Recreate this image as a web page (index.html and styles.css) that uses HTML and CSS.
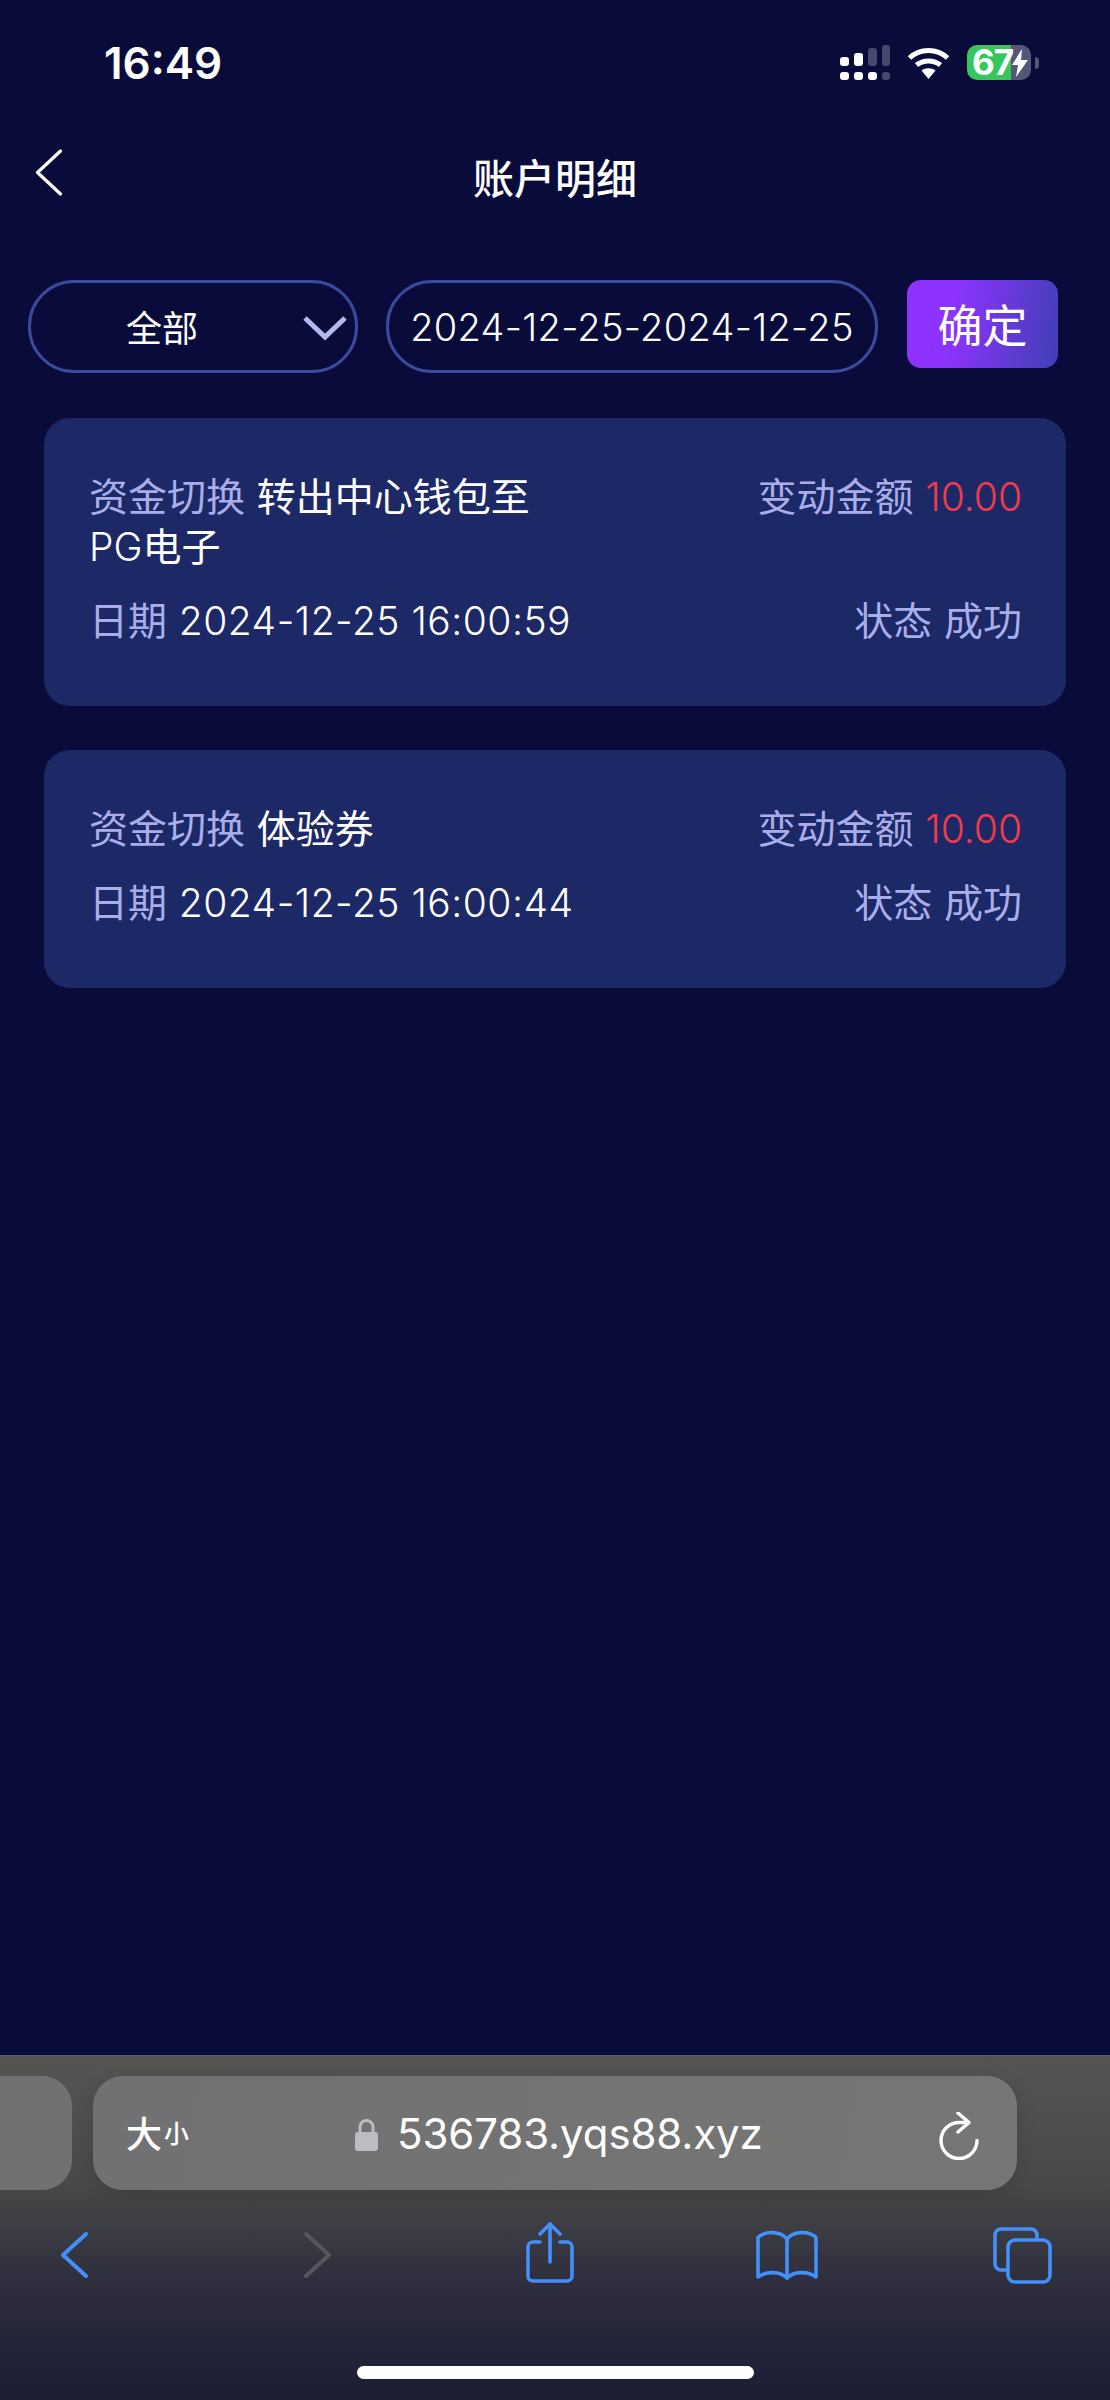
FILE: index.html
```html
<!DOCTYPE html>
<html lang="zh-CN">
<head>
<meta charset="utf-8">
<title>账户明细</title>
<link rel="stylesheet" href="styles.css">
</head>
<body>
<div class="page">
  <header class="status">
    <span class="time">16:49</span>
    <div class="status-icons">
      <svg class="signal" width="50" height="36" viewBox="0 0 50 36" fill="#fff">
        <rect x="0" y="12" width="9" height="9" rx="3"/><rect x="14" y="8" width="9" height="13" rx="3"/>
        <rect x="28" y="3" width="9" height="18" rx="3" opacity=".25"/><rect x="42" y="0" width="8" height="21" rx="3" opacity=".25"/>
        <rect x="0" y="27" width="9" height="8" rx="3"/><rect x="14" y="27" width="9" height="8" rx="3"/>
        <rect x="28" y="27" width="9" height="8" rx="3"/><rect x="42" y="27" width="8" height="8" rx="3" opacity=".25"/>
      </svg>
      <svg class="wifi" width="43" height="32" viewBox="0 0 43 32" fill="none" stroke="#fff" stroke-width="5">
        <path d="M2.5 11C13 1 30 1 40.5 11"/><path d="M9.5 18C16 12.5 27 12.5 33.5 18"/>
        <path d="M14.5 23.5 21.5 32 28.5 23.5C25 20.5 18 20.5 14.5 23.5Z" fill="#fff" stroke="none"/>
      </svg>
      <div class="battery"><span class="batt-level">67</span>
        <svg class="bolt" width="18" height="28" viewBox="0 0 18 28" fill="#fff"><path d="M11 0 1 16h6L5 28 17 11h-7z"/></svg>
      </div>
      <span class="batt-tip"></span>
    </div>
  </header>

  <nav class="navbar">
    <svg class="nav-back" width="28" height="47" viewBox="0 0 28 47" fill="none" stroke="#fff" stroke-width="3.2" stroke-linecap="round" stroke-linejoin="round">
      <path d="M25.500 2 2.500 23.500 25.500 45"/>
    </svg>
    <h1 class="title">账户明细</h1>
  </nav>

  <section class="filters">
    <div class="pill pill-select">
      <span class="select-text">全部</span>
      <svg class="caret" width="44" height="26" viewBox="0 0 44 26" fill="none" stroke="#b3b8ee" stroke-width="5">
        <path d="M2 3 22 22 42 3"/>
      </svg>
    </div>
    <div class="pill pill-date">2024-12-25-2024-12-25</div>
    <button class="confirm">确定</button>
  </section>

  <main class="list">
    <article class="card">
      <div class="row">
        <div class="left narrow"><span class="label">资金切换</span> 转出中心钱包至<span class="latin">PG</span>电子</div>
        <div class="right"><span class="label">变动金额</span> <span class="amount">10.00</span></div>
      </div>
      <div class="row">
        <div class="left"><span class="label">日期</span> <span class="num">2024-12-25 16:00:59</span></div>
        <div class="right"><span class="label">状态</span> <span class="label">成功</span></div>
      </div>
    </article>
    <article class="card">
      <div class="row">
        <div class="left narrow"><span class="label">资金切换</span> 体验券</div>
        <div class="right"><span class="label">变动金额</span> <span class="amount">10.00</span></div>
      </div>
      <div class="row">
        <div class="left"><span class="label">日期</span> <span class="num">2024-12-25 16:00:44</span></div>
        <div class="right"><span class="label">状态</span> <span class="label">成功</span></div>
      </div>
    </article>
  </main>

  <footer class="browser">
    <div class="tabs-strip">
      <div class="prev-tab"></div>
      <div class="urlbar">
        <span class="aa"><span class="aa-big">大</span><span class="aa-small">小</span></span>
        <div class="address">
          <svg class="lock" width="23" height="33" viewBox="0 0 23 33">
            <path d="M5 15V9a6.500 6.500 0 0 1 13 0v6" fill="none" stroke="#bcbcc2" stroke-width="3"/>
            <rect x="0" y="14" width="23" height="19" rx="3" fill="#bcbcc2"/>
          </svg>
          <span class="url">536783.yqs88.xyz</span>
        </div>
        <svg class="reload" width="40" height="48" viewBox="0 0 40 48" fill="none" stroke="#fff" stroke-width="3.400" stroke-linecap="round" stroke-linejoin="round">
          <path d="M38 28.500A18 18 0 1 1 20 10.500H29"/><path d="M19 1 30 10.500 19 20"/>
        </svg>
      </div>
    </div>
    <div class="toolbar">
      <svg class="tool t-back" width="27" height="46" viewBox="0 0 27 46" fill="none" stroke="#4390fb" stroke-width="4" stroke-linecap="round" stroke-linejoin="round"><path d="M25 2 2 23 25 44"/></svg>
      <svg class="tool t-forward" width="27" height="46" viewBox="0 0 27 46" fill="none" stroke="#56565e" stroke-width="4" stroke-linecap="round" stroke-linejoin="round"><path d="M2 2 25 23 2 44"/></svg>
      <svg class="tool t-share" width="48" height="62" viewBox="0 0 48 62" fill="none" stroke="#4390fb" stroke-width="3.600" stroke-linecap="round" stroke-linejoin="round">
        <path d="M14 20H7a5 5 0 0 0-5 5v29a5 5 0 0 0 5 5h34a5 5 0 0 0 5-5V25a5 5 0 0 0-5-5h-7"/>
        <path d="M24 40V2"/><path d="M14 12 24 2 34 12"/>
      </svg>
      <svg class="tool t-book" width="62" height="50" viewBox="0 0 62 50" fill="none" stroke="#4390fb" stroke-width="3.600" stroke-linecap="round" stroke-linejoin="round">
        <path d="M31 9C26 2 12 0 3 6.500a2 2 0 0 0-1 2V47C10 41 24 41 31 48 38 41 52 41 60 47V8.500a2 2 0 0 0-1-2C50 0 36 2 31 9Z"/><path d="M31 9V48"/>
      </svg>
      <svg class="tool t-tabs" width="59" height="57" viewBox="0 0 59 57" fill="none" stroke="#4390fb" stroke-width="3.600" stroke-linejoin="round">
        <path d="M44 13V8a6 6 0 0 0-6-6H8a6 6 0 0 0-6 6v29a6 6 0 0 0 6 6h6"/>
        <rect x="15" y="13" width="42" height="42" rx="7"/>
      </svg>
    </div>
    <div class="home-bar"></div>
  </footer>
</div>
</body>
</html>
```
FILE: styles.css
```css
* { box-sizing: border-box; }
html, body { margin: 0; padding: 0; }
body {
  background: #090c3a;
  color: #fff;
  font-family: "Noto Sans CJK SC", "Liberation Sans", sans-serif;
}
.page { width: 1110px; height: 2400px; display: flex; flex-direction: column; overflow: hidden; }

.status { height: 126px; padding: 33px 71px 0 104px; display: flex; justify-content: space-between; align-items: flex-start; flex: none; }
.time { font: 600 44px/60px Inter, "Liberation Sans", sans-serif; color: #fff; }
.status-icons { display: flex; align-items: flex-start; padding-top: 12px; }
.signal { margin-right: 17px; }
.wifi { margin-top: 2px; margin-right: 17px; }
.battery { position: relative; width: 64px; height: 35px; border-radius: 10px; background: linear-gradient(90deg, #37c659 0 44px, #54567a 44px); display: flex; align-items: center; }
.batt-level { font: 700 35px/35px Inter, "Liberation Sans", sans-serif; margin-left: 5px; letter-spacing: -1px; }
.bolt { position: absolute; left: 44px; top: 4px; }
.batt-tip { width: 4px; height: 12px; margin: 12px 0 0 4px; border-radius: 0 4px 4px 0; background: #54567a; }

.navbar { height: 98px; padding-left: 36px; position: relative; display: flex; align-items: center; flex: none; }
.nav-back { position: absolute; left: 35px; top: 23px; }
.title { flex: 1; margin: 0 0 0 -36px; text-align: center; font-size: 41px; line-height: 56px; font-weight: 500; position: relative; top: 1px; }

.filters { margin-top: 56px; padding: 0 52px 0 28px; display: flex; align-items: flex-start; flex: none; }
.pill { height: 93px; border: 3px solid #3c4a9c; border-radius: 46px; display: flex; align-items: center; position: relative; }
.pill-select { width: 330px; padding-left: 95px; margin-right: 28px; }
.select-text { font-size: 36px; font-weight: 400; position: relative; top: -1px; }
.caret { position: absolute; right: 8px; top: 32px; }
.pill-date { width: 493px; justify-content: center; font: 300 38px/50px Inter, sans-serif; letter-spacing: .3px; }
.confirm { width: 151px; height: 88px; margin-left: 29px; border: 0; border-radius: 14px; padding: 0; color: #fff; font: 400 45px/60px "Noto Sans CJK SC", sans-serif; background: linear-gradient(100deg, #8e33ff 30%, #3f3fb5 100%); }

.list { margin-top: 45px; padding: 0 44px; display: flex; flex-direction: column; gap: 44px; flex: 1; }
.card { background: #1d2867; border-radius: 26px; padding: 51px 44px 63px 45px; display: flex; flex-direction: column; gap: 24px; }
.row { display: flex; justify-content: space-between; align-items: flex-start; font-size: 39px; line-height: 50px; font-weight: 400; word-spacing: 3px; }
.narrow { width: 470px; }
.label, .amount, .num, .latin { line-height: 1; }
.label { color: #a9aeea; }
.amount { color: #f13b4a; font-family: Inter, sans-serif; font-weight: 300; }
.num { font-family: Inter, sans-serif; font-weight: 300; word-spacing: 0; letter-spacing: .5px; }
.latin { font-family: Inter, sans-serif; font-weight: 300; }
.right { white-space: nowrap; }

.browser { height: 345px; flex: none; position: relative; border-top: 1px solid #5e5e64;
  background: linear-gradient(180deg, rgba(90,88,78,.25), rgba(90,88,78,0) 40%), linear-gradient(180deg, #535353 0, #484848 130px, #2e2e3e 225px, #1c1c34 345px); }
.tabs-strip { display: flex; gap: 21px; padding-top: 20px; }
.prev-tab { width: 72px; height: 114px; background: #717174; border-radius: 0 30px 30px 0; }
.urlbar { width: 924px; height: 114px; background: linear-gradient(100deg, #717173, #767674); border-radius: 30px; display: flex; align-items: center; position: relative; box-shadow: 0 4px 20px rgba(0,0,0,.12); }
.aa { position: absolute; left: 33px; top: 36px; display: flex; align-items: flex-end; font-weight: 500; line-height: 40px; }
.aa-big { font-size: 36px; }
.aa-small { font-size: 25px; margin-left: 2px; }
.address { position: absolute; left: 262px; top: 28px; display: flex; align-items: center; gap: 19px; }
.url { font: 400 42px/60px Inter, sans-serif; letter-spacing: -.1px; color: #fff; }
.reload { position: absolute; left: 846px; top: 36px; }

.toolbar { position: absolute; left: 0; right: 0; top: 166px; height: 70px; }
.tool { position: absolute; }
.t-back { left: 61px; top: 10px; }
.t-forward { left: 304px; top: 10px; }
.t-share { left: 526px; top: 0; }
.t-book { left: 756px; top: 8px; }
.t-tabs { left: 993px; top: 5px; }
.home-bar { position: absolute; left: 357px; top: 310px; width: 397px; height: 13px; border-radius: 7px; background: #fff; }
```
